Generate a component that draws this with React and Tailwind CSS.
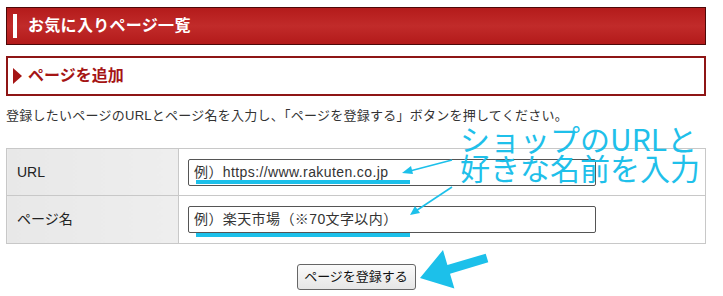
import React from "react";

export default function App() {
  const font = { fontFamily: '"Liberation Sans", "Noto Sans CJK JP", sans-serif' };
  return (
    <div className="relative w-[723px] h-[296px] bg-white overflow-hidden text-[#222]" style={font}>
      <div className="px-[6px] pt-[7px] w-[712px]">
        {/* Header */}
        <div className="h-[38px] w-[700px] border border-[#4d0808] bg-[linear-gradient(180deg,#b41b1b_0%,#c12b2a_50%,#b31a1a_100%)] flex items-center">
          <div className="ml-[6px] w-[4px] h-[24px] bg-white" />
          <span className="ml-[11px] text-white font-bold text-[16px] leading-none tracking-[0.3px]">お気に入りページ一覧</span>
        </div>

        {/* Section */}
        <div className="mt-[11px] h-[40px] w-[700px] border-2 border-[#8e1515] flex items-center">
          <div className="ml-[5px] w-0 h-0 border-y-[8px] border-y-transparent border-l-[9px] border-l-[#a51515]" />
          <span className="ml-[6px] text-[#a51515] font-bold text-[16px] leading-none">ページを追加</span>
        </div>

        {/* Description */}
        <p className="mt-[12px] text-[13px] leading-[16px] text-[#333] tracking-[0.25px]">
          登録したいページのURLとページ名を入力し、「ページを登録する」ボタンを押してください。
        </p>

        {/* Table */}
        <table className="mt-[24px] w-[700px] border-collapse">
          <tbody>
            <tr className="h-[47px]">
              <td className="w-[172px] border border-[#c8c8c8] bg-[linear-gradient(90deg,#e8e8e8,#eeeeee)] pl-[10px] text-[14px]">URL</td>
              <td className="border border-[#c8c8c8] pl-[9px]">
                <div className="w-[408px] h-[27px] border border-[#555] rounded-[2px] flex items-center pl-[5px] text-[14px] text-[#333] tracking-[0.4px]">
                  例）https://www.rakuten.co.jp
                </div>
              </td>
            </tr>
            <tr className="h-[48px]">
              <td className="w-[172px] border border-[#c8c8c8] bg-[linear-gradient(90deg,#e8e8e8,#eeeeee)] pl-[10px] text-[14px]">ページ名</td>
              <td className="border border-[#c8c8c8] pl-[9px]">
                <div className="w-[408px] h-[27px] border border-[#555] rounded-[2px] flex items-center pl-[5px] text-[14px] text-[#333] tracking-[0.4px]">
                  例）楽天市場（※70文字以内）
                </div>
              </td>
            </tr>
          </tbody>
        </table>

        {/* Button */}
        <div className="mt-[20px] w-[700px] flex justify-center">
          <button className="h-[26px] w-[119px] border border-[#666] rounded-[3px] bg-[linear-gradient(180deg,#fafafa,#e6e6e6)] text-[13px] text-[#111]">
            ページを登録する
          </button>
        </div>
      </div>

      {/* Annotation overlay */}
      <svg className="absolute left-0 top-0 pointer-events-none" width="723" height="296" viewBox="0 0 723 296">
        <rect x="196" y="180" width="214" height="4" fill="#1cc0ea" />
        <rect x="196" y="233" width="214" height="4" fill="#1cc0ea" />
        <line x1="452" y1="160" x2="408" y2="171.5" stroke="#1cc0ea" strokeWidth="1.6" />
        <polygon points="402,173 411,166 413,174" fill="#1cc0ea" />
        <line x1="452" y1="187" x2="415" y2="211.5" stroke="#1cc0ea" strokeWidth="1.6" />
        <polygon points="410,215 415,206 420,213" fill="#1cc0ea" />
        <polygon points="420,278 443,250 447.4,265.1 485.7,253.7 488.3,262.3 450,273.7 454.4,288.6" fill="#1cc0ea" />
      </svg>
      <div
        className="absolute left-[460px] top-[125px] text-[30px] leading-[29px] text-[#1fc0ea] whitespace-nowrap pointer-events-none"
        style={{ fontFamily: '"Noto Sans CJK JP", sans-serif', fontWeight: 400 }}
      >
        <div className="-mt-[1px]">ショップのURLと</div>
        <div>好きな名前を入力</div>
      </div>
    </div>
  );
}
